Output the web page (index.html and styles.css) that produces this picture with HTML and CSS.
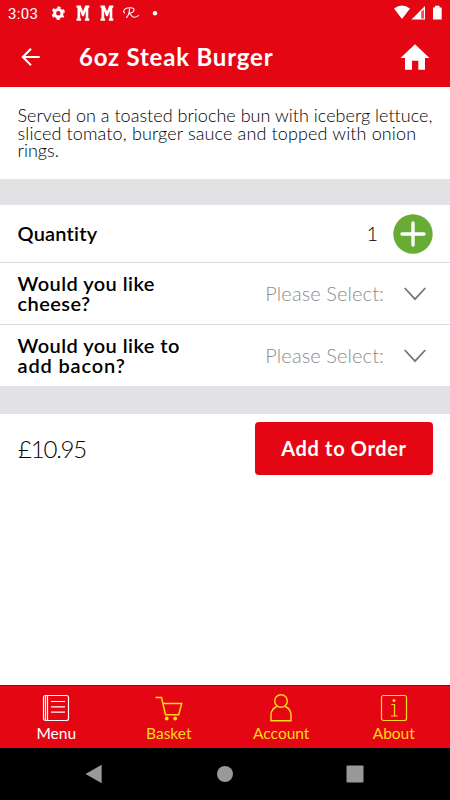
FILE: index.html
```html
<!DOCTYPE html>
<html lang="en">
<head>
<meta charset="utf-8">
<title>6oz Steak Burger</title>
<link rel="stylesheet" href="styles.css">
</head>
<body>
<header class="header">
  <div class="status">
    <span class="clock">3:03</span>
    <svg class="status-left" width="110" height="26" viewBox="50 0 110 26">
      <g fill="none" stroke="#fff">
        <circle cx="58.3" cy="13.2" r="3.7" stroke-width="3"/>
        <circle cx="58.3" cy="13.2" r="5.7" stroke-width="2" stroke-dasharray="3 2.97" stroke-dashoffset="1.5" transform="rotate(30 58.3 13.2)"/>
      </g>
      <g id="m" fill="#fff"><path d="M76.500 5.500h4.200l2.300 6 2.300-6h4v2.200h-1v10.800h1v2.200h-4.400v-2.200h.8v-7.500l-1.900 5.300h-1.600l-2-5.300v7.500h.9v2.200h-4.600v-2.200h1v-10.800h-1z"/></g>
      <use href="#m" x="24"/>
      <path d="M124.500 13c-2-2 0-4.500 3-5 4-.7 7 .2 6.500 2.300-.5 2-3 2.700-5.500 2.700 2 0 3 4.300 5.500 4.300 2 0 3.200-.8 4.500-1.700M129.500 8.500c0 4-1 7-3 9" fill="none" stroke="#fff" stroke-width="1.100" stroke-linecap="round"/>
      <circle cx="155" cy="13.200" r="2.200" fill="#fff"/>
    </svg>
    <svg class="status-right" width="50" height="26" viewBox="393 0 50 26">
      <path d="M394 8.500q8-6 16 0l-8 10.500z" fill="#fff"/>
      <path d="M411.500 19.500L425 6v13.500z" fill="#fff"/>
      <path d="M421.400 11.500l2.300-1.800v8.800h-2.300z" fill="#e50613"/>
      <path d="M422.200 11h.8v7h-.8z" fill="#fff" opacity=".4"/>
      <path d="M433 7.500h2v-1.700h4.500v1.700h2.200v12H433z" fill="#fff"/>
    </svg>
  </div>
  <div class="titlebar">
    <svg class="back" width="20" height="20" viewBox="0 0 20 20"><path d="M18.700 10H2M10 1.800L1.800 10l8.200 8.200" fill="none" stroke="#fff" stroke-width="2"/></svg>
    <h1 class="title">6oz Steak Burger</h1>
    <svg class="home" width="30" height="26" viewBox="0 0 30 26"><path d="M15 .3L29.500 14H25v11.700h-6.700V16.800h-6.300v8.900H5V14H.500z" fill="#fff"/></svg>
  </div>
</header>
<main class="main">
  <p class="description">Served on a toasted brioche bun with iceberg lettuce,<br><span class="line-b">sliced tomato, burger sauce and topped with onion</span><br>rings.</p>
  <div class="band"></div>
  <section class="row quantity">
    <span class="label quantity-label">Quantity</span>
    <span class="count">1</span>
    <svg class="plus" width="40" height="40" viewBox="0 0 40 40"><circle cx="20" cy="20" r="19.700" fill="#69ac35"/><path d="M20 9v22M9 20h22" stroke="#fff" stroke-width="3.400" stroke-linecap="round"/></svg>
  </section>
  <section class="row">
    <span class="label">Would you like<br>cheese?</span>
    <span class="select">Please Select:</span>
    <svg class="chevron" width="22" height="14" viewBox="0 0 22 14"><path d="M.7 1L11 12.200 21.300 1" fill="none" stroke="#777" stroke-width="1.800"/></svg>
  </section>
  <section class="row last">
    <span class="label">Would you like to<br><span class="wide">add bacon?</span></span>
    <span class="select">Please Select:</span>
    <svg class="chevron" width="22" height="14" viewBox="0 0 22 14"><path d="M.7 1L11 12.200 21.300 1" fill="none" stroke="#777" stroke-width="1.800"/></svg>
  </section>
  <div class="band tall"></div>
  <section class="checkout">
    <span class="price">£10.95</span>
    <button class="add">Add to Order</button>
  </section>
</main>
<nav class="tabs">
  <a class="tab active">
    <svg width="28" height="28" viewBox="0 0 28 28" fill="none" stroke="currentColor" stroke-width="1.200"><rect x="1.500" y="1.500" width="25" height="25" rx="2"/><path d="M3.500 1.500v25M5.500 1.500v25M9 7.500h14M9 12.800h14M9 18.200h14"/></svg>
    <span class="tab-label">Menu</span>
  </a>
  <a class="tab">
    <svg width="28" height="28" viewBox="0 0 28 28" fill="none" stroke="currentColor" stroke-width="1.500"><path d="M.5 3.500h6l4 17.200h13.200L26.700 9.500H8"/><circle cx="11.700" cy="24.500" r="1.900" fill="currentColor" stroke="none"/><circle cx="20.200" cy="24.500" r="1.900" fill="currentColor" stroke="none"/></svg>
    <span class="tab-label">Basket</span>
  </a>
  <a class="tab">
    <svg width="28" height="28" viewBox="0 0 28 28" fill="none" stroke="currentColor" stroke-width="1.400"><circle cx="14" cy="7" r="6.300"/><path d="M9.800 12.500C6 14.200 4 17 4 21v5.700h20V21c0-4-2-6.800-5.800-8.500"/></svg>
    <span class="tab-label">Account</span>
  </a>
  <a class="tab">
    <svg width="28" height="28" viewBox="0 0 28 28" fill="none" stroke="currentColor" stroke-width="1.200"><rect x="1.500" y="1.500" width="25" height="25" rx="2"/><path d="M11.300 10.500h3.200V22M11 22h6.700"/><circle cx="14" cy="6.500" r="1.500" fill="currentColor" stroke="none"/></svg>
    <span class="tab-label">About</span>
  </a>
</nav>
<footer class="sysnav">
  <svg width="18" height="20" viewBox="0 0 18 20"><path d="M.5 10L16.700.8v18.400z" fill="#999"/></svg>
  <svg width="18" height="18" viewBox="0 0 18 18"><circle cx="9" cy="9" r="8" fill="#999"/></svg>
  <svg width="18" height="18" viewBox="0 0 18 18"><rect x=".5" y=".5" width="17" height="17" rx="1" fill="#999"/></svg>
</footer>
</body>
</html>
```

FILE: styles.css
```css
* { box-sizing: border-box; }
body {
  margin: 0;
  width: 450px;
  height: 800px;
  display: flex;
  flex-direction: column;
  background: #fff;
  color: #000;
  font-family: Lato, "Liberation Sans", sans-serif;
  font-variant-ligatures: none;
  overflow: hidden;
  white-space: nowrap;
}
.header { height: 87px; background: #e50613; color: #fff; }
.status { height: 27px; display: flex; padding: 0 7px 0 8px; }
.clock { width: 42px; font: 15px/28px Roboto, sans-serif; letter-spacing: 0.3px; }
.status-right { margin-left: auto; }
.titlebar { height: 60px; display: flex; align-items: center; padding: 0 20px 0 21px; }
.title { margin: 0 auto 0 38px; font-size: 24px; font-weight: 700; line-height: 30px; letter-spacing: 0.800px; }
.description { margin: 0; height: 92px; padding: 20px 17px 0 17.500px; font-size: 18px; font-weight: 300; line-height: 17.700px; letter-spacing: 0.020px; }
.line-b { letter-spacing: 0.130px; }
.band { height: 26px; background: #e2e2e4; }
.band.tall { height: 28px; }
.row {
  height: 62px;
  display: flex;
  align-items: center;
  padding: 0 24px 0 17.500px;
  border-bottom: 1px solid #dcdcde;
}
.row.quantity { height: 58px; padding-right: 17px; }
.row.last { height: 61px; border-bottom: 0; }
.label { margin-right: auto; font-size: 20px; font-weight: 600; line-height: 19.500px; letter-spacing: 0.450px; }
.quantity-label { letter-spacing: 0.200px; }
.wide { letter-spacing: 0.850px; }
.count { margin: 0 15px 2px 0; font-size: 20px; font-weight: 300; }
.select { margin: 0 20px 2px 0; color: #8c8c8c; font-size: 20px; font-weight: 300; letter-spacing: 0.100px; }
.checkout { height: 70px; display: flex; align-items: center; padding: 0 17px 0 18px; }
.price { margin: 0 auto 2px 0; font-size: 24px; font-weight: 300; letter-spacing: -1.200px; }
.add {
  width: 178px;
  height: 53px;
  margin-bottom: 1px;
  padding: 0 0 2px;
  border: 0;
  border-radius: 4px;
  background: #e50613;
  color: #fff;
  font: 700 20px Lato, sans-serif;
  letter-spacing: 0.650px;
}
.tabs {
  height: 63px;
  margin-top: auto;
  display: grid;
  grid-template-columns: repeat(4, 1fr);
  border-top: 1px solid #472a2c;
  background: #e50613;
}
.tab { display: flex; flex-direction: column; align-items: center; padding-top: 8px; color: #fcdc16; }
.tab.active { color: #fff; }
.tab-label { font-size: 15.500px; line-height: 18px; margin-top: 2px; }
.sysnav { height: 52px; display: flex; align-items: center; justify-content: space-between; padding: 0 86px 0 85px; background: #000; }
```
